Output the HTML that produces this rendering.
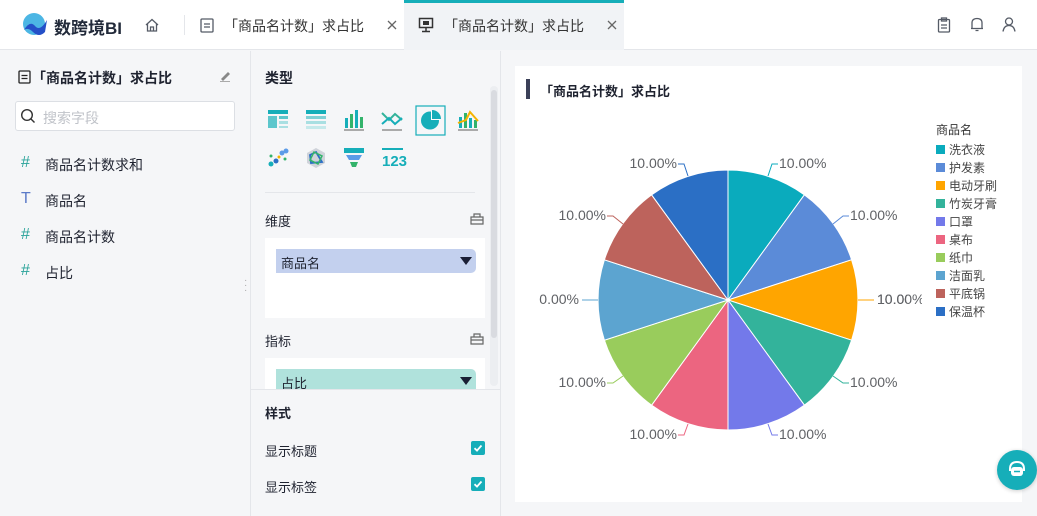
<!DOCTYPE html>
<html><head><meta charset="utf-8"><style>
*{margin:0;padding:0;box-sizing:border-box}
body{width:1037px;height:516px;overflow:hidden;background:#f5f6f8;font-family:"Liberation Sans","Noto Sans CJK SC",sans-serif;color:#1f2330;position:relative}
.abs{position:absolute}
.top{left:0;top:0;width:1037px;height:50px;background:#fff;border-bottom:1px solid #e4e6ea}
.t{font-size:14px;white-space:nowrap}
.ico{stroke:#555b66;fill:none;stroke-width:1.3}
.cb{width:14px;height:14px;background:#16aeb9;border-radius:2px}
</style></head><body>
<div class="abs top"></div>
<svg class="abs" style="left:21px;top:12px" width="28" height="26" viewBox="0 0 28 26"><circle cx="13" cy="12" r="11" fill="#4cb6e4"/><path d="M3 18 Q9 8 14 14 Q19 20 26 8 L24 20 Q18 26 12 20 Q7 15 3 18Z" fill="#2450c8"/></svg>
<div class="abs" style="left:54px;top:14px;font-size:17px;font-weight:bold;color:#222a3a">数跨境BI</div>
<svg class="abs" style="left:144px;top:17px" width="16" height="16" viewBox="0 0 16 16"><path class="ico" d="M2 8 L8 2.5 L14 8 M3.5 7 V14 H12.5 V7 M6.5 14 V10 H9.5 V14"/></svg>
<div class="abs" style="left:184px;top:15px;width:1px;height:20px;background:#e4e6ea"></div>
<svg class="abs" style="left:200px;top:18px" width="14" height="15" viewBox="0 0 14 15"><rect class="ico" x="1" y="1" width="12" height="13" rx="1"/><path class="ico" d="M4 6H10M4 9H10"/></svg>
<div class="abs t" style="left:224px;top:16px;color:#333">「商品名计数」求占比</div>
<svg class="abs" style="left:387px;top:20px" width="10" height="10"><path d="M1 1L9 9M9 1L1 9" stroke="#666" stroke-width="1.3"/></svg>
<div class="abs" style="left:404px;top:0;width:220px;height:50px;background:#f1f3f6;border-top:3px solid #16aeb9"></div>
<svg class="abs" style="left:418px;top:17px" width="16" height="16" viewBox="0 0 16 16"><rect x="1.5" y="1.5" width="13" height="9" fill="none" stroke="#333" stroke-width="1.5"/><rect x="5" y="4" width="6" height="4" fill="#333"/><path d="M8 11V14M4 14.5H12" stroke="#333" stroke-width="1.5"/></svg>
<div class="abs t" style="left:444px;top:16px;color:#333">「商品名计数」求占比</div>
<svg class="abs" style="left:607px;top:20px" width="10" height="10"><path d="M1 1L9 9M9 1L1 9" stroke="#666" stroke-width="1.3"/></svg>
<svg class="abs" style="left:937px;top:17px" width="14" height="16" viewBox="0 0 14 16"><rect class="ico" x="1.5" y="2.5" width="11" height="12.5" rx="1"/><rect class="ico" x="4.5" y="1" width="5" height="3"/><path class="ico" d="M4 8H10M4 11H10"/></svg>
<svg class="abs" style="left:969px;top:16px" width="16" height="17" viewBox="0 0 16 17"><path class="ico" d="M3 12.5 V7 Q3 2.5 8 2.5 Q13 2.5 13 7 V12.5 H2 H14 M6.5 14.5 H9.5"/></svg>
<svg class="abs" style="left:1001px;top:16px" width="16" height="17" viewBox="0 0 16 17"><circle class="ico" cx="8" cy="5.5" r="3.5"/><path class="ico" d="M2 15.5 Q3 9.5 8 9.5 Q13 9.5 14 15.5"/></svg>

<div class="abs" style="left:0;top:51px;width:250px;height:465px;background:#f5f6f8"></div>
<svg class="abs" style="left:18px;top:70px" width="13" height="14" viewBox="0 0 13 14"><rect x="1" y="1" width="11" height="12" rx="1" fill="none" stroke="#222" stroke-width="1.3"/><path d="M3.5 5.5H9.5M3.5 8.5H9.5" stroke="#222" stroke-width="1.3"/></svg>
<div class="abs t" style="left:32px;top:68px;font-weight:bold">「商品名计数」求占比</div>
<svg class="abs" style="left:218px;top:69px" width="14" height="13" viewBox="0 0 14 13"><path d="M3 10 L10 3 L12 5 L5 12Z" fill="#888"/><path d="M2 12.5H12" stroke="#aaa"/></svg>
<div class="abs" style="left:15px;top:101px;width:220px;height:30px;background:#fff;border:1px solid #dcdfe4;border-radius:3px"></div>
<svg class="abs" style="left:20px;top:108px" width="16" height="16" viewBox="0 0 16 16"><circle cx="7" cy="7" r="5.3" fill="none" stroke="#333" stroke-width="1.4"/><path d="M11 11 L14.5 14.5" stroke="#333" stroke-width="1.4"/></svg>
<div class="abs t" style="left:43px;top:108px;color:#c0c3c9">搜索字段</div>
<div class="abs" style="left:21px;top:154px;color:#2aa39a;font-size:16px">#</div><div class="abs t" style="left:45px;top:155px">商品名计数求和</div>
<div class="abs" style="left:21px;top:190px;color:#5b7ac8;font-size:16px">T</div><div class="abs t" style="left:45px;top:191px">商品名</div>
<div class="abs" style="left:21px;top:226px;color:#2aa39a;font-size:16px">#</div><div class="abs t" style="left:45px;top:227px">商品名计数</div>
<div class="abs" style="left:21px;top:262px;color:#2aa39a;font-size:16px">#</div><div class="abs t" style="left:45px;top:263px">占比</div>
<div class="abs" style="left:244px;top:278px;color:#aaa;font-size:10px;line-height:5px">·<br>·<br>·</div>
<div class="abs" style="left:250px;top:51px;width:1px;height:465px;background:#e4e6ea"></div>

<div class="abs t" style="left:265px;top:68px;font-weight:bold">类型</div>
<svg class="abs" style="left:262px;top:102px" width="220" height="72" viewBox="0 0 220 72">
<rect x="154" y="4" width="29" height="29" fill="none" stroke="#16aeb9" stroke-width="1.2"/>
<g transform="translate(6,8)"><rect width="20" height="4" fill="#16aeb9"/><rect y="6" width="9" height="12" fill="#5cc6cc"/><rect x="11" y="6" width="9" height="3" fill="#5cc6cc"/><rect x="11" y="11" width="9" height="3" fill="#a9dfe2"/><rect x="11" y="16" width="9" height="2" fill="#a9dfe2"/></g>
<g transform="translate(44,8)"><rect width="20" height="4" fill="#16aeb9"/><rect y="6" width="20" height="3" fill="#7fd0d5"/><rect y="11" width="20" height="3" fill="#a9dfe2"/><rect y="16" width="20" height="3" fill="#c5e9eb"/></g>
<g transform="translate(82,8)"><rect x="1" y="8" width="3" height="10" fill="#16aeb9"/><rect x="6" y="4" width="3" height="14" fill="#33b36b"/><rect x="11" y="0" width="3" height="18" fill="#16aeb9"/><rect x="16" y="7" width="3" height="11" fill="#33b36b"/><rect y="19" width="20" height="2" fill="#aaa"/></g>
<g transform="translate(120,8)" fill="none" stroke-width="2"><path d="M0 3 L7 10 L13 4 L20 10" stroke="#33b39b"/><path d="M0 14 L7 8 L13 14 L20 8" stroke="#16aeb9"/><rect y="19" width="20" height="2" fill="#aaa" stroke="none"/></g>
<g transform="translate(158,8)"><circle cx="10" cy="10.5" r="9" fill="#16aeb9"/><path d="M11 1 A9 9 0 0 1 20 10 L11 10Z" fill="#fff"/><path d="M12 0 A9 9 0 0 1 21 9 L12 9Z" fill="#16aeb9"/></g>
<g transform="translate(196,8)"><rect x="1" y="7" width="3" height="11" fill="#16aeb9"/><rect x="6" y="3" width="3" height="15" fill="#33b36b"/><rect x="11" y="8" width="3" height="10" fill="#16aeb9"/><rect x="16" y="10" width="3" height="8" fill="#33b36b"/><path d="M0 13 L8 10 L12 2 L20 11" stroke="#f5b400" stroke-width="2" fill="none"/><rect y="19" width="20" height="2" fill="#aaa"/></g>
<g transform="translate(6,46)"><circle cx="3" cy="16" r="2.5" fill="#16aeb9"/><circle cx="8" cy="13" r="2.5" fill="#2b6fc5"/><circle cx="14" cy="5" r="2.5" fill="#5b9be8"/><circle cx="18" cy="3" r="2.5" fill="#5b9be8"/><circle cx="3" cy="8" r="1.5" fill="#33b36b"/><circle cx="11" cy="9" r="1.5" fill="#f5b400"/><circle cx="17" cy="11" r="1.5" fill="#33b36b"/></g>
<g transform="translate(44,46)"><path d="M10 0 L19 5 L19 15 L10 20 L1 15 L1 5Z" fill="#cfd3da"/><path d="M10 4 L16 14 L5 15 L4 7Z" fill="none" stroke="#2b6fc5" stroke-width="1.8"/><path d="M8 4 L16 8 L12 16 L4 12Z" fill="none" stroke="#33b36b" stroke-width="1.5"/></g>
<g transform="translate(82,46)"><rect x="0" y="0" width="20" height="5" fill="#16aeb9"/><path d="M2 7 H18 L15 12 H5Z" fill="#5b9be8"/><path d="M6 14 H14 L12 19 H8Z" fill="#33b36b"/></g>
<text x="120" y="64" font-family="Liberation Sans" font-weight="bold" font-size="15" fill="#16aeb9">123</text><rect x="120" y="46" width="21" height="2" fill="#16aeb9"/>
</svg>
<div class="abs" style="left:265px;top:192px;width:210px;height:1px;background:#e4e6ea"></div>
<div class="abs t" style="left:265px;top:211px;font-size:13px">维度</div>
<svg class="abs" style="left:470px;top:212px" width="14" height="13" viewBox="0 0 14 13"><path d="M1 5H13V12H1Z M4 5V2H10V5 M1 8H13" fill="none" stroke="#666" stroke-width="1.2"/></svg>
<div class="abs" style="left:265px;top:238px;width:220px;height:80px;background:#fff"></div>
<div class="abs" style="left:276px;top:249px;width:200px;height:24px;background:#c3d0ee;border-radius:0 5px 5px 0"></div>
<div class="abs t" style="left:281px;top:253px;font-size:13px">商品名</div>
<div class="abs" style="left:460px;top:257px;width:0;height:0;border-left:6px solid transparent;border-right:6px solid transparent;border-top:8px solid #1a1f35"></div>
<div class="abs t" style="left:265px;top:331px;font-size:13px">指标</div>
<svg class="abs" style="left:470px;top:332px" width="14" height="13" viewBox="0 0 14 13"><path d="M1 5H13V12H1Z M4 5V2H10V5 M1 8H13" fill="none" stroke="#666" stroke-width="1.2"/></svg>
<div class="abs" style="left:265px;top:358px;width:220px;height:32px;background:#fff"></div>
<div class="abs" style="left:276px;top:369px;width:200px;height:21px;background:#b0e2dc;border-radius:0 5px 0 0"></div>
<div class="abs t" style="left:281px;top:373px;font-size:13px">占比</div>
<div class="abs" style="left:460px;top:377px;width:0;height:0;border-left:6px solid transparent;border-right:6px solid transparent;border-top:8px solid #1a1f35"></div>
<div class="abs" style="left:490px;top:86px;width:8px;height:300px;background:#eceef1;border-radius:4px"></div>
<div class="abs" style="left:491px;top:90px;width:6px;height:248px;background:#d9dbe0;border-radius:3px"></div>
<div class="abs" style="left:251px;top:389px;width:249px;height:1px;background:#e4e6ea"></div>
<div class="abs t" style="left:265px;top:403px;font-size:13px;font-weight:bold">样式</div>
<div class="abs t" style="left:265px;top:441px;font-size:13px">显示标题</div>
<div class="abs t" style="left:265px;top:477px;font-size:13px">显示标签</div>
<svg class="abs cb" style="left:471px;top:441px" viewBox="0 0 14 14"><path d="M3.5 7.2 L6 9.6 L10.5 4.5" fill="none" stroke="#fff" stroke-width="1.8"/></svg>
<svg class="abs cb" style="left:471px;top:477px" viewBox="0 0 14 14"><path d="M3.5 7.2 L6 9.6 L10.5 4.5" fill="none" stroke="#fff" stroke-width="1.8"/></svg>
<div class="abs" style="left:500px;top:51px;width:1px;height:465px;background:#e4e6ea"></div>

<div class="abs" style="left:515px;top:66px;width:507px;height:436px;background:#fff"></div>
<div class="abs" style="left:526px;top:79px;width:4px;height:20px;background:#3b4058"></div>
<div class="abs t" style="left:540px;top:81px;font-size:13px;font-weight:bold">「商品名计数」求占比</div>
<svg class="abs" style="left:0;top:0" width="1037" height="516">
<g stroke="#fff" stroke-width="1">
<path d="M728 300 L728 170 A130 130 0 0 1 804.4 194.8Z" fill="#0aabbd"/>
<path d="M728 300 L804.4 194.8 A130 130 0 0 1 851.6 259.8Z" fill="#5b8bd8"/>
<path d="M728 300 L851.6 259.8 A130 130 0 0 1 851.6 340.2Z" fill="#ffa500"/>
<path d="M728 300 L851.6 340.2 A130 130 0 0 1 804.4 405.2Z" fill="#33b39b"/>
<path d="M728 300 L804.4 405.2 A130 130 0 0 1 728 430Z" fill="#7379ea"/>
<path d="M728 300 L728 430 A130 130 0 0 1 651.6 405.2Z" fill="#ec6580"/>
<path d="M728 300 L651.6 405.2 A130 130 0 0 1 604.4 340.2Z" fill="#99cc5c"/>
<path d="M728 300 L604.4 340.2 A130 130 0 0 1 604.4 259.8Z" fill="#5ca4d0"/>
<path d="M728 300 L604.4 259.8 A130 130 0 0 1 651.6 194.8Z" fill="#bd635c"/>
<path d="M728 300 L651.6 194.8 A130 130 0 0 1 728 170Z" fill="#2b6fc5"/>
</g>
<g fill="none" stroke-width="1">
<path d="M768 176 L772 164 H778" stroke="#0aabbd"/>
<path d="M833 224 L843 216 H849" stroke="#5b8bd8"/>
<path d="M858 300 H874" stroke="#ffa500"/>
<path d="M833 376 L843 383 H849" stroke="#33b39b"/>
<path d="M768 424 L772 435 H778" stroke="#7379ea"/>
<path d="M688 424 L684 435 H678" stroke="#ec6580"/>
<path d="M623 376 L613 383 H607" stroke="#99cc5c"/>
<path d="M598 300 H582" stroke="#5ca4d0"/>
<path d="M623 224 L613 216 H607" stroke="#bd635c"/>
<path d="M688 176 L684 164 H678" stroke="#2b6fc5"/>
</g>
<g font-family="Liberation Sans" font-size="14" fill="#606266">
<text x="779" y="168">10.00%</text>
<text x="850" y="220">10.00%</text>
<text x="877" y="304">10.00%</text>
<text x="850" y="387">10.00%</text>
<text x="779" y="439">10.00%</text>
<text x="677" y="439" text-anchor="end">10.00%</text>
<text x="606" y="387" text-anchor="end">10.00%</text>
<text x="579" y="304" text-anchor="end">0.00%</text>
<text x="606" y="220" text-anchor="end">10.00%</text>
<text x="677" y="168" text-anchor="end">10.00%</text>
</g>
</svg>
<div class="abs" style="left:922px;top:66px;width:100px;height:436px;background:#fff"></div>
<div class="abs" style="left:936px;top:121px;font-size:12px;color:#333;line-height:18px">商品名</div>
<div class="abs" style="left:936px;top:141px;font-size:12px;color:#444;line-height:18px">
<div><span style="display:inline-block;width:9px;height:9px;background:#0aabbd;margin-right:4px"></span>洗衣液</div>
<div><span style="display:inline-block;width:9px;height:9px;background:#5b8bd8;margin-right:4px"></span>护发素</div>
<div><span style="display:inline-block;width:9px;height:9px;background:#ffa500;margin-right:4px"></span>电动牙刷</div>
<div><span style="display:inline-block;width:9px;height:9px;background:#33b39b;margin-right:4px"></span>竹炭牙膏</div>
<div><span style="display:inline-block;width:9px;height:9px;background:#7379ea;margin-right:4px"></span>口罩</div>
<div><span style="display:inline-block;width:9px;height:9px;background:#ec6580;margin-right:4px"></span>桌布</div>
<div><span style="display:inline-block;width:9px;height:9px;background:#99cc5c;margin-right:4px"></span>纸巾</div>
<div><span style="display:inline-block;width:9px;height:9px;background:#5ca4d0;margin-right:4px"></span>洁面乳</div>
<div><span style="display:inline-block;width:9px;height:9px;background:#bd635c;margin-right:4px"></span>平底锅</div>
<div><span style="display:inline-block;width:9px;height:9px;background:#2b6fc5;margin-right:4px"></span>保温杯</div>
</div>
<svg class="abs" style="left:877px;top:290px" width="30" height="20"><text x="0" y="14" font-family="Liberation Sans" font-size="14" fill="#606266">10.00%</text></svg>
<div class="abs" style="left:997px;top:450px;width:40px;height:40px;border-radius:20px;background:#16aeb9;box-shadow:0 1px 4px rgba(0,0,0,.2)"></div>
<svg class="abs" style="left:1005px;top:458px" width="24" height="24" viewBox="0 0 24 24"><path d="M5 13 V11 Q5 4 12 4 Q19 4 19 11 V13" fill="none" stroke="#fff" stroke-width="2"/><rect x="6" y="9" width="12" height="9" rx="3" fill="#fff"/><path d="M9 13.5H15" stroke="#16aeb9" stroke-width="1.5"/></svg>
</body></html>
